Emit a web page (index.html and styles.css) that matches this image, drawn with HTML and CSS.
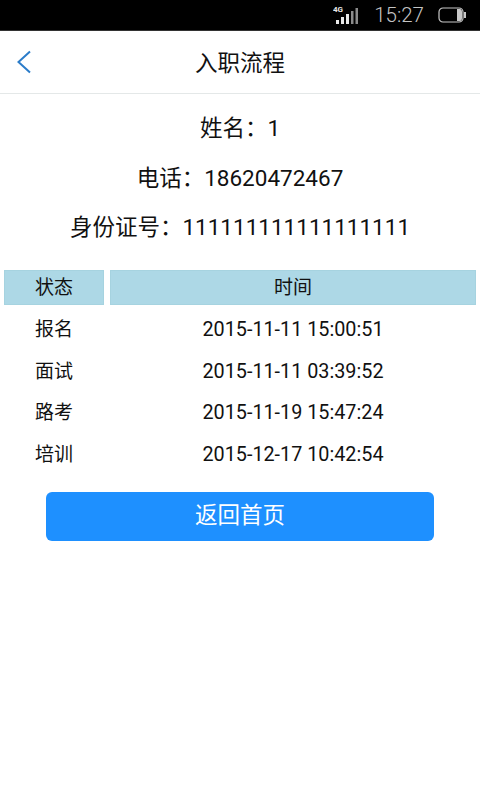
FILE: index.html
```html
<!DOCTYPE html>
<html lang="zh-CN">
<head>
    <meta charset="UTF-8">
    <meta name="viewport" content="width=device-width, initial-scale=1.0">
    <title>入职流程</title>
    <link rel="stylesheet" href="styles.css">
</head>
<body>
    <div class="status-bar">
        <svg class="signal" width="26" height="22" viewBox="0 0 26 22">
            <text x="0" y="8" class="signal-label">4G</text>
            <rect x="3" y="16" width="3" height="4" fill="#e8e8e8"/>
            <rect x="8" y="13" width="3" height="7" fill="#e8e8e8"/>
            <rect x="13" y="10" width="3" height="10" fill="#e8e8e8"/>
            <rect x="18" y="7" width="2.5" height="13" fill="#8a8a8a"/>
            <rect x="22.5" y="4" width="2.5" height="16" fill="#8a8a8a"/>
        </svg>
        <span class="clock">15:27</span>
        <svg class="battery" width="28" height="16" viewBox="0 0 28 16">
            <rect x="1" y="1" width="24" height="14" rx="4" fill="none" stroke="#c8c8c8" stroke-width="1.2"/>
            <path d="M19 2 H22 Q24 2 24 5 V11 Q24 14 22 14 H19 Z" fill="#c8c8c8"/>
            <rect x="26" y="5" width="2" height="6" fill="#c8c8c8"/>
        </svg>
    </div>

    <div class="title-bar">
        <a href="#" class="back">
            <svg width="16" height="24" viewBox="0 0 16 24">
                <path d="M14 1.5 L2.5 12 L14 22.5" fill="none" stroke="#2b7cc9" stroke-width="2"/>
            </svg>
        </a>
        <h1>入职流程</h1>
    </div>

    <div class="info">
        <p>姓名：1</p>
        <p>电话：18620472467</p>
        <p>身份证号：111111111111111111</p>
    </div>

    <div class="progress">
        <div class="progress-head">
            <div class="col-state">状态</div>
            <div class="col-time">时间</div>
        </div>
        <div class="progress-row">
            <div class="col-state">报名</div>
            <div class="col-time">2015-11-11 15:00:51</div>
        </div>
        <div class="progress-row">
            <div class="col-state">面试</div>
            <div class="col-time">2015-11-11 03:39:52</div>
        </div>
        <div class="progress-row">
            <div class="col-state">路考</div>
            <div class="col-time">2015-11-19 15:47:24</div>
        </div>
        <div class="progress-row">
            <div class="col-state">培训</div>
            <div class="col-time">2015-12-17 10:42:54</div>
        </div>
    </div>

    <button type="button" class="home-button">返回首页</button>
</body>
</html>
```

FILE: styles.css
```css
body {
    font-family: Roboto, "Noto Sans CJK SC", sans-serif;
    background-color: white;
    margin: 0;
    padding: 0;
    color: #111;
}

.status-bar {
    background-color: black;
    height: 31px;
    border-bottom: 1px solid #333;
    display: flex;
    align-items: center;
    justify-content: flex-end;
    padding-right: 14px;
    box-sizing: border-box;
    color: #c4c4c4;
}

.signal {
    margin-right: 15px;
}

.signal-label {
    font-size: 8px;
    font-weight: bold;
    fill: #e8e8e8;
}

.clock {
    font-size: 20.5px;
    font-weight: 300;
    margin-right: 14px;
}

.title-bar {
    height: 62px;
    border-bottom: 1px solid #e4e8e8;
    display: flex;
    align-items: center;
    justify-content: center;
    position: relative;
}

.back {
    position: absolute;
    left: 16px;
    top: 19px;
    line-height: 0;
}

h1 {
    margin: 0 0 3px;
    font-size: 22.5px;
    font-weight: 400;
}

.info {
    padding-top: 10px;
    text-align: center;
    font-size: 22.5px;
}

.info p {
    margin: 0;
    height: 49.5px;
    line-height: 49.5px;
}

.progress {
    margin-top: 17.5px;
    padding: 0 4px;
    font-size: 19px;
}

.progress-head,
.progress-row {
    display: flex;
    gap: 6px;
    text-align: center;
}

.progress-head {
    height: 35px;
    line-height: 33px;
    margin-bottom: 4px;
}

.progress-head div {
    background-color: #add8e6;
    box-sizing: border-box;
    border: 1px solid #a6d3e0;
}

.progress-row {
    height: 41.5px;
    line-height: 41.5px;
}

.col-state {
    width: 100px;
}

.col-time {
    flex: 1;
}

.progress-row .col-time {
    font-size: 19.8px;
}

.home-button {
    display: block;
    width: 388px;
    height: 49px;
    margin: 17px auto 0;
    padding: 0 0 7px;
    background-color: #1e90ff;
    color: white;
    border: none;
    border-radius: 6px;
    font-family: inherit;
    font-size: 22.5px;
    cursor: pointer;
}
```
